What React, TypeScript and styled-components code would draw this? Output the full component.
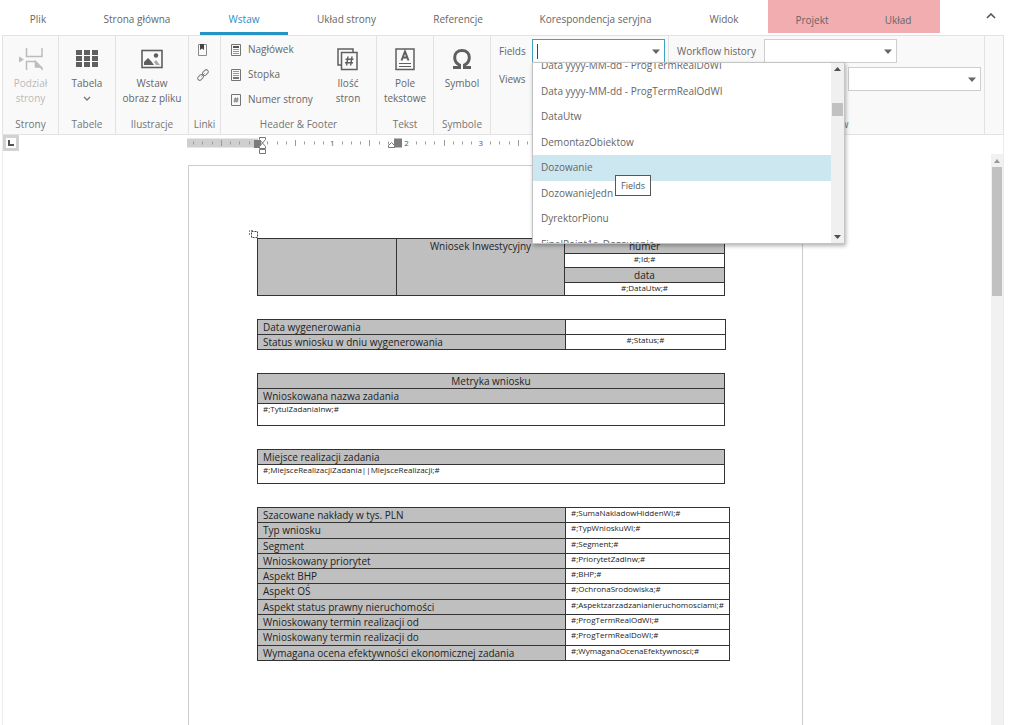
import React from "react";
import styled, { createGlobalStyle, css } from "styled-components";

const GlobalStyle = createGlobalStyle`
  *, *::before, *::after { box-sizing: border-box; }
  body {
    margin: 0;
    background: #fff;
    color: #666;
    font: 10px/15px "Open Sans", "Noto Sans", sans-serif;
  }
  button, input, select { font: inherit; color: inherit; }
  button { padding: 0; border: 0; background: none; }
`;

const Shell = styled.div`
  display: flex;
  flex-direction: column;
  height: 100vh;
  padding: 0 20px 0 2px;
  overflow: hidden;
`;

/* ---------- tabs ---------- */

const TabBar = styled.nav`
  display: flex;
  flex: none;
  height: 35px;
`;

const Tab = styled.button<{ $width: number; $active?: boolean }>`
  width: ${(p) => p.$width}px;
  padding-top: 4px;
  white-space: nowrap;
  ${(p) =>
    p.$active &&
    css`
      padding-top: 7px;
      color: #2a8fcb;
      border-bottom: 3px solid #2493c4;
    `}
`;

const ContextTabs = styled.div`
  display: flex;
  height: 33px;
  background: #f1adaf;
  ${Tab} {
    padding-top: 7px;
  }
`;

const CollapseButton = styled.button`
  display: flex;
  align-items: center;
  justify-content: center;
  width: 26px;
  height: 31px;
  margin-left: auto;
`;

/* ---------- ribbon ---------- */

const Ribbon = styled.div`
  display: flex;
  flex: none;
  height: 100px;
  background: #f9f9f9;
  border: 1px solid #e2e2e2;
  border-width: 1px 1px 1px 0;
`;

const Group = styled.section<{ $width: number }>`
  display: flex;
  flex-direction: column;
  justify-content: space-between;
  flex: none;
  width: ${(p) => p.$width}px;
  padding-bottom: 2px;
  border-left: 1px solid #e2e2e2;
`;

const GroupBody = styled.div`
  display: flex;
  justify-content: center;
`;

const GroupLabel = styled.div`
  color: #757575;
  text-align: center;
  white-space: nowrap;
`;

const RibbonEnd = styled.div`
  flex: 1;
  border-left: 1px solid #e2e2e2;
`;

const BigButton = styled.button`
  display: flex;
  flex-direction: column;
  align-items: center;
  gap: 5px;
  min-width: 56px;
  padding-top: 11px;
  text-align: center;
  white-space: pre-line;
  &:disabled {
    color: #b9b9b9;
  }
  svg {
    display: block;
  }
`;

const SmallList = styled.div`
  display: flex;
  flex: 1;
  flex-direction: column;
  padding: 1px 0 0 10px;
`;

const SmallButton = styled.button`
  display: flex;
  align-items: center;
  gap: 7px;
  height: 25px;
  white-space: nowrap;
`;

const IconList = styled(SmallList)`
  padding-left: 8px;
`;

const Fields = styled.div`
  display: flex;
  flex: 1;
  flex-direction: column;
  gap: 4px;
  padding: 3px 3px 0 8px;
`;

const FieldRow = styled.div<{ $label?: number }>`
  display: flex;
  align-items: center;
  height: 24px;
  label {
    flex: none;
    width: ${(p) => p.$label ?? 0}px;
    white-space: nowrap;
  }
`;

const Combo = styled.div<{ $open?: boolean; $end?: boolean }>`
  position: relative;
  display: flex;
  align-items: center;
  width: 133px;
  height: 24px;
  margin-left: ${(p) => (p.$end ? "auto" : "0")};
  background: #fff;
  border: 1px solid ${(p) => (p.$open ? "#3da3c4" : "#cfcfcf")};
  input,
  select {
    flex: 1;
    min-width: 0;
    height: 100%;
    padding: 0 4px;
    border: 0;
    outline: 0;
    background: transparent;
    appearance: none;
  }
  > svg {
    flex: none;
    margin-right: 4px;
    pointer-events: none;
  }
`;

const Caret = styled.span`
  flex: none;
  width: 1px;
  height: 15px;
  margin-left: 4px;
  background: #444;
`;

const Popup = styled.div`
  position: absolute;
  z-index: 2;
  top: 22px;
  left: -1px;
  display: flex;
  width: 313px;
  height: 182px;
  background: #fff;
  border: 1px solid #c4c4c4;
  box-shadow: 1px 2px 4px rgba(0, 0, 0, 0.3);
`;

const Options = styled.div`
  flex: 1;
  overflow: hidden;
`;

const OptionList = styled.ul`
  display: grid;
  grid-auto-rows: 1fr;
  height: 204px;
  margin: -10px 0 0;
  padding: 0;
  list-style: none;
`;

const Option = styled.li<{ $selected?: boolean }>`
  display: flex;
  align-items: center;
  padding-left: 8px;
  white-space: nowrap;
  background: ${(p) => (p.$selected ? "#cde7f1" : "transparent")};
`;

const PopupScroll = styled.div`
  display: flex;
  flex-direction: column;
  align-items: center;
  justify-content: space-between;
  width: 13px;
  padding: 4px 0;
  background: #f0f0f0;
`;

const PopupTrack = styled.div`
  flex: 1;
  width: 11px;
  padding-top: 32px;
  &::before {
    content: "";
    display: block;
    height: 13px;
    background: #c1c1c1;
  }
`;

const Tooltip = styled.div`
  position: absolute;
  z-index: 3;
  top: 112px;
  left: 82px;
  padding: 2px 5px;
  font-size: 9px;
  color: #575757;
  background: #fff;
  border: 1px solid #575757;
`;

/* ---------- editor ---------- */

const Editor = styled.main`
  display: flex;
  flex: 1;
  flex-direction: column;
  min-height: 0;
  border: solid #ececec;
  border-width: 0 1px;
`;

const RulerRow = styled.div`
  display: flex;
  flex: none;
  height: 19px;
  padding-right: 30px;
`;

const TabStop = styled.button`
  display: flex;
  align-items: center;
  justify-content: center;
  width: 16px;
  height: 16px;
  border: 3px solid #d2d2d2;
`;

const RulerHolder = styled.div`
  display: flex;
  flex: 1;
  justify-content: center;
`;

const Workspace = styled.div`
  display: flex;
  flex: 1;
  min-height: 0;
`;

const Canvas = styled.div`
  flex: 1;
  padding: 11px 3px 0 0;
  overflow: hidden;
`;

const Page = styled.article`
  width: 615px;
  height: 870px;
  margin: 0 auto;
  padding: 64px 60px 0 60px;
  color: #222;
  border: 1px solid #cdcdcd;
`;

const Handle = styled.svg`
  display: block;
`;

const Sheet = styled.div`
  display: flex;
  flex-direction: column;
  align-items: flex-start;
  gap: 23px;
  padding-left: 8px;
`;

const Table = styled.table<{ $width: number; $height: number }>`
  width: ${(p) => p.$width}px;
  height: ${(p) => p.$height}px;
  table-layout: fixed;
  border-collapse: collapse;
`;

const Cell = styled.td<{ $head?: boolean; $center?: boolean; $height?: number }>`
  height: ${(p) => (p.$height ? `${p.$height}px` : "auto")};
  padding: 0 5px;
  border: 1px solid #333;
  vertical-align: top;
  white-space: nowrap;
  text-align: ${(p) => (p.$center ? "center" : "left")};
  font-size: ${(p) => (p.$head ? 10 : 8)}px;
  line-height: ${(p) => (p.$head ? 14 : 10)}px;
  background: ${(p) => (p.$head ? "#bfbfbf" : "#fff")};
`;

const Scrollbar = styled.div`
  flex: none;
  width: 12px;
  background: #f1f1f1;
  svg {
    display: block;
    margin: 5px auto 4px;
  }
`;

const Thumb = styled.div`
  height: 129px;
  margin: 0 1px;
  background: #c1c1c1;
`;

/* ---------- icons ---------- */

const DownArrow = () => (
  <svg width="8" height="5" viewBox="0 0 8 5" aria-hidden="true">
    <path d="M0 .500h8L4 5z" fill="#666" />
  </svg>
);

const PageBreakIcon = () => (
  <svg width="26" height="24" viewBox="0 0 26 24" aria-hidden="true" fill="none" stroke="#bcbcbc" strokeWidth="1.500">
    <path d="M8.500 1v8.500h15.500V1M8.500 23v-8.500h9" />
    <path d="M17 14.500l7 6.500v2M17.500 14.500v5.500H23z" fill="#bcbcbc" />
    <path d="M1 9.500l5 3-5 3z" fill="#bcbcbc" stroke="none" />
  </svg>
);

const TableIcon = () => (
  <svg width="24" height="24" viewBox="0 0 24 24" aria-hidden="true" fill="#5f5f5f">
    {[3, 9, 15].map((y) => [1, 9, 17].map((x) => <rect key={`${x}-${y}`} x={x} y={y} width="6" height="5" />))}
  </svg>
);

const ImageIcon = () => (
  <svg width="24" height="24" viewBox="0 0 24 24" aria-hidden="true">
    <rect x="2" y="3.500" width="20" height="17" fill="none" stroke="#5f5f5f" strokeWidth="1.600" />
    <circle cx="16" cy="8.500" r="2.200" fill="#5f5f5f" />
    <path d="M4 18v-3l4-4 3 3 3 4z" fill="#5f5f5f" />
    <path d="M14 15l2-2 4 5h-4z" fill="#aaa" />
  </svg>
);

const BookmarkIcon = () => (
  <svg width="11" height="12" viewBox="0 0 11 12" aria-hidden="true">
    <path d="M1.500.500h8v11h-8z" fill="none" stroke="#8a8a8a" />
    <path d="M3 0h4v6L5 4.500 3 6z" fill="#444" />
  </svg>
);

const LinkIcon = () => (
  <svg width="12" height="12" viewBox="0 0 12 12" aria-hidden="true" fill="none" stroke="#808080">
    <rect x="-3.200" y="-2" width="6.400" height="4" rx="2" transform="translate(3.600 8.400) rotate(-45)" />
    <rect x="-3.200" y="-2" width="6.400" height="4" rx="2" transform="translate(8.400 3.600) rotate(-45)" />
    <path d="M4.500 7.500l3-3" />
  </svg>
);

const HeaderIcon = () => (
  <svg width="10" height="12" viewBox="0 0 10 12" aria-hidden="true" fill="none" stroke="#757575">
    <path d="M.500.500h9v11h-9z" />
    <path d="M2 3h6" stroke="#555" strokeWidth="2" />
    <path d="M2 5.500h6M2 7.500h6M2 9.500h6" stroke="#999" />
  </svg>
);

const FooterIcon = () => (
  <svg width="10" height="12" viewBox="0 0 10 12" aria-hidden="true" fill="none" stroke="#757575">
    <path d="M.500.500h9v11h-9z" />
    <path d="M2 2.500h6M2 4.500h6M2 6.500h6" stroke="#999" />
    <path d="M2 9h6" strokeWidth="2" />
  </svg>
);

const PageNumberIcon = () => (
  <svg width="10" height="12" viewBox="0 0 10 12" aria-hidden="true" fill="none" stroke="#757575">
    <path d="M.500.500h9v11h-9z" />
    <path d="M4.500 3.500l-.800 5M6.500 3.500l-.800 5M2.800 5h4.800M2.500 7h4.800" strokeWidth=".9" />
  </svg>
);

const PageCountIcon = () => (
  <svg width="24" height="24" viewBox="0 0 24 24" aria-hidden="true" fill="none" stroke="#5f5f5f" strokeWidth="1.500">
    <path d="M5 18H2V2h15v3" />
    <path d="M5.500 5.500h15.500v17H5.500z" fill="#f9f9f9" />
    <path d="M12 9.500l-1.400 9M16 9.500l-1.400 9M9.500 12.300h8M9 15.700h8" strokeWidth="1.500" />
  </svg>
);

const TextBoxIcon = () => (
  <svg width="24" height="24" viewBox="0 0 24 24" aria-hidden="true" fill="none" stroke="#5f5f5f" strokeWidth="1.500">
    <path d="M3 2h18v20.500H3z" />
    <path d="M8.500 13.500L12 4.500l3.500 9M9.800 10.500h4.400" strokeWidth="2" />
    <path d="M6 16.500h12M6 19.500h12" strokeWidth="1.200" />
  </svg>
);

const OmegaIcon = () => (
  <svg width="24" height="24" viewBox="0 0 24 24" aria-hidden="true" fill="none" stroke="#5f5f5f" strokeWidth="3">
    <path d="M3 20.500h6.500v-2.500C6.500 16.500 4.700 14 4.700 10.500 4.700 6 7.700 3.500 12 3.500s7.300 2.500 7.300 7c0 3.500-1.800 6-4.800 7.500v2.500H21" />
  </svg>
);

const INCH = 74.25;
const ZERO = 71;

const Ruler = () => {
  const ticks = [];
  for (let k = -7; k < 58; k++) {
    const x = ZERO + (k * INCH) / 8;
    if (k === 0) continue;
    if (k > 0 && k % 8 === 0) {
      if (k <= 24) {
        ticks.push(
          <text key={k} x={x} y="11" fontSize="8" textAnchor="middle" fill="#555">
            {k / 8}
          </text>
        );
      }
    } else {
      const tall = k % 4 === 0;
      ticks.push(<path key={k} d={`M${Math.round(x) + 0.5} ${tall ? 5 : 6.5}v${tall ? 6 : 3}`} stroke="#9a9a9a" />);
    }
  }
  return (
    <svg width="619" height="19" viewBox="0 0 619 19" role="img" aria-label="Linijka">
      <path d="M0 3.500h71v9H0z" fill="#cfcfcf" />
      {ticks}
      <path d="M67 5h7v8h-7zM207 3.500h8v9h-8z" fill="#7c7c7c" />
      <g fill="#fff" stroke="#777">
        <path d="M72.500 2.500h6v2l-3 3.500 3 3.500v2h-6v-2L75.500 8l-3-3.500z" />
        <path d="M72.500 14.500h6v4h-6z" />
        <path d="M201.500 12.500v-2l3-3 3 3v2z" />
      </g>
    </svg>
  );
};

/* ---------- data ---------- */

const TABS: [string, number][] = [
  ["Plik", 72],
  ["Strona główna", 126],
  ["Wstaw", 88],
  ["Układ strony", 117],
  ["Referencje", 106],
  ["Korespondencja seryjna", 169],
  ["Widok", 88],
];

const OPTIONS = [
  "Data yyyy-MM-dd - ProgTermRealDoWI",
  "Data yyyy-MM-dd - ProgTermRealOdWI",
  "DataUtw",
  "DemontazObiektow",
  "Dozowanie",
  "DozowanieJedn",
  "DyrektorPionu",
  "FinalPoint1a_Dozowanie",
];

const DETAILS = [
  ["Szacowane nakłady w tys. PLN", "#;SumaNakladowHiddenWI;#"],
  ["Typ wniosku", "#;TypWnioskuWI;#"],
  ["Segment", "#;Segment;#"],
  ["Wnioskowany priorytet", "#;PriorytetZadInw;#"],
  ["Aspekt BHP", "#;BHP;#"],
  ["Aspekt OŚ", "#;OchronaSrodowiska;#"],
  ["Aspekt status prawny nieruchomości", "#;Aspektzarzadzanianieruchomosciami;#"],
  ["Wnioskowany termin realizacji od", "#;ProgTermRealOdWI;#"],
  ["Wnioskowany termin realizacji do", "#;ProgTermRealDoWI;#"],
  ["Wymagana ocena efektywności ekonomicznej zadania", "#;WymaganaOcenaEfektywnosci;#"],
];

const RibbonGroup = ({ label, width, children }: { label?: string; width: number; children: React.ReactNode }) => (
  <Group $width={width}>
    <GroupBody>{children}</GroupBody>
    {label && <GroupLabel>{label}</GroupLabel>}
  </Group>
);

export default function App() {
  return (
    <Shell>
      <GlobalStyle />
      <TabBar>
        {TABS.map(([name, width]) => (
          <Tab key={name} $width={width} $active={name === "Wstaw"}>
            {name}
          </Tab>
        ))}
        <ContextTabs>
          <Tab $width={88}>Projekt</Tab>
          <Tab $width={84}>Układ</Tab>
        </ContextTabs>
        <CollapseButton aria-label="Zwiń wstążkę">
          <svg width="10" height="6" viewBox="0 0 10 6" fill="none" stroke="#555" strokeWidth="1.600">
            <path d="M1 5l4-4 4 4" />
          </svg>
        </CollapseButton>
      </TabBar>

      <Ribbon>
        <RibbonGroup label="Strony" width={56}>
          <BigButton disabled>
            <PageBreakIcon />
            {"Podział\nstrony"}
          </BigButton>
        </RibbonGroup>
        <RibbonGroup label="Tabele" width={57}>
          <BigButton>
            <TableIcon />
            Tabela
            <svg width="8" height="5" viewBox="0 0 8 5" fill="none" stroke="#777" strokeWidth="1.300">
              <path d="M1 1l3 3 3-3" />
            </svg>
          </BigButton>
        </RibbonGroup>
        <RibbonGroup label="Ilustracje" width={73}>
          <BigButton>
            <ImageIcon />
            {"Wstaw\nobraz z pliku"}
          </BigButton>
        </RibbonGroup>
        <RibbonGroup label="Linki" width={32}>
          <IconList>
            <SmallButton aria-label="Zakładka">
              <BookmarkIcon />
            </SmallButton>
            <SmallButton aria-label="Hiperłącze">
              <LinkIcon />
            </SmallButton>
          </IconList>
        </RibbonGroup>
        <RibbonGroup label="Header & Footer" width={156}>
          <SmallList>
            <SmallButton>
              <HeaderIcon />
              Nagłówek
            </SmallButton>
            <SmallButton>
              <FooterIcon />
              Stopka
            </SmallButton>
            <SmallButton>
              <PageNumberIcon />
              Numer strony
            </SmallButton>
          </SmallList>
          <BigButton>
            <PageCountIcon />
            {"Ilość\nstron"}
          </BigButton>
        </RibbonGroup>
        <RibbonGroup label="Tekst" width={57}>
          <BigButton>
            <TextBoxIcon />
            {"Pole\ntekstowe"}
          </BigButton>
        </RibbonGroup>
        <RibbonGroup label="Symbole" width={57}>
          <BigButton>
            <OmegaIcon />
            Symbol
          </BigButton>
        </RibbonGroup>
        <RibbonGroup width={178}>
          <Fields>
            <FieldRow $label={33}>
              <label htmlFor="fields">Fields</label>
              <Combo $open>
                <Caret />
                <input id="fields" role="combobox" aria-expanded="true" aria-controls="fields-list" />
                <DownArrow />
                <Popup>
                  <Options>
                    <OptionList id="fields-list" role="listbox">
                      {OPTIONS.map((o) => (
                        <Option key={o} role="option" aria-selected={o === "Dozowanie"} $selected={o === "Dozowanie"}>
                          {o}
                        </Option>
                      ))}
                    </OptionList>
                  </Options>
                  <PopupScroll aria-hidden="true">
                    <svg width="7" height="4" viewBox="0 0 7 4">
                      <path d="M0 4l3.500-4L7 4z" fill="#505050" />
                    </svg>
                    <PopupTrack />
                    <svg width="7" height="4" viewBox="0 0 7 4">
                      <path d="M0 0l3.500 4L7 0z" fill="#505050" />
                    </svg>
                  </PopupScroll>
                  <Tooltip role="tooltip">Fields</Tooltip>
                </Popup>
              </Combo>
            </FieldRow>
            <FieldRow $label={33}>
              <label htmlFor="views">Views</label>
              <Combo>
                <select id="views" />
                <DownArrow />
              </Combo>
            </FieldRow>
          </Fields>
        </RibbonGroup>
        <RibbonGroup label="Workflow" width={316}>
          <Fields>
            <FieldRow $label={87}>
              <label htmlFor="history">Workflow history</label>
              <Combo>
                <select id="history" />
                <DownArrow />
              </Combo>
            </FieldRow>
            <FieldRow>
              <Combo $end>
                <select aria-label="Workflow" />
                <DownArrow />
              </Combo>
            </FieldRow>
          </Fields>
        </RibbonGroup>
        <RibbonEnd />
      </Ribbon>

      <Editor>
        <RulerRow>
          <TabStop aria-label="Tabulator">
            <svg width="6" height="6" viewBox="0 0 6 6" fill="none" stroke="#555" strokeWidth="2">
              <path d="M1 0v5h5" />
            </svg>
          </TabStop>
          <RulerHolder>
            <Ruler />
          </RulerHolder>
        </RulerRow>
        <Workspace>
          <Canvas>
            <Page>
              <Handle width="9" height="8" viewBox="0 0 9 8" fill="none" stroke="#444" aria-hidden="true">
                <path d="M2.500 1.500h6v6h-6z" strokeDasharray="2 1" />
                <path d="M.500 5V.500H5" stroke="#888" strokeDasharray="2 1" />
              </Handle>
              <Sheet>
                <Table $width={468} $height={58}>
                  <colgroup>
                    <col width={139} />
                    <col width={168} />
                    <col />
                  </colgroup>
                  <tbody>
                    <tr>
                      <Cell $head rowSpan={4} />
                      <Cell $head $center rowSpan={4}>
                        Wniosek Inwestycyjny
                      </Cell>
                      <Cell $head $center>
                        numer
                      </Cell>
                    </tr>
                    <tr>
                      <Cell $center $height={14}>
                        #;Id;#
                      </Cell>
                    </tr>
                    <tr>
                      <Cell $head $center>
                        data
                      </Cell>
                    </tr>
                    <tr>
                      <Cell $center $height={13}>
                        #;DataUtw;#
                      </Cell>
                    </tr>
                  </tbody>
                </Table>

                <Table $width={469} $height={31}>
                  <colgroup>
                    <col width={308} />
                    <col />
                  </colgroup>
                  <tbody>
                    <tr>
                      <Cell $head>Data wygenerowania</Cell>
                      <Cell />
                    </tr>
                    <tr>
                      <Cell $head>Status wniosku w dniu wygenerowania</Cell>
                      <Cell $center>#;Status;#</Cell>
                    </tr>
                  </tbody>
                </Table>

                <Table $width={468} $height={53}>
                  <tbody>
                    <tr>
                      <Cell $head $center>
                        Metryka wniosku
                      </Cell>
                    </tr>
                    <tr>
                      <Cell $head>Wnioskowana nazwa zadania</Cell>
                    </tr>
                    <tr>
                      <Cell $height={22}>#;TytulZadaniaInw;#</Cell>
                    </tr>
                  </tbody>
                </Table>

                <Table $width={468} $height={35}>
                  <tbody>
                    <tr>
                      <Cell $head>Miejsce realizacji zadania</Cell>
                    </tr>
                    <tr>
                      <Cell $height={19}>#;MiejsceRealizacjiZadania||MiejsceRealizacji;#</Cell>
                    </tr>
                  </tbody>
                </Table>

                <Table $width={473} $height={154}>
                  <colgroup>
                    <col width={308} />
                    <col />
                  </colgroup>
                  <tbody>
                    {DETAILS.map(([name, value]) => (
                      <tr key={name}>
                        <Cell $head>{name}</Cell>
                        <Cell>{value}</Cell>
                      </tr>
                    ))}
                  </tbody>
                </Table>
              </Sheet>
            </Page>
          </Canvas>
          <Scrollbar aria-hidden="true">
            <svg width="6" height="4" viewBox="0 0 6 4">
              <path d="M0 4l3-4 3 4z" fill="#999" />
            </svg>
            <Thumb />
          </Scrollbar>
        </Workspace>
      </Editor>
    </Shell>
  );
}
